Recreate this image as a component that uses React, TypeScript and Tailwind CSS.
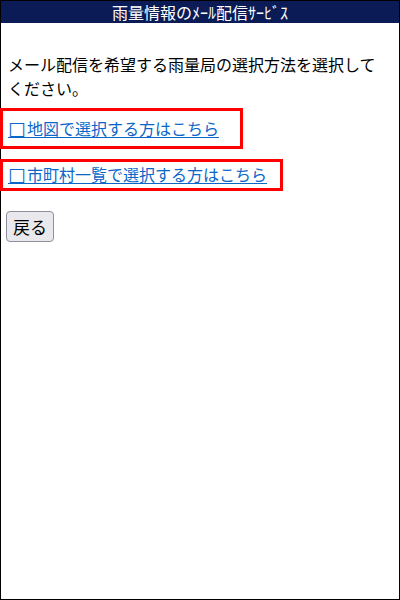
import React from "react";

const jp = "font-['Noto_Sans_CJK_JP',sans-serif]";

function SelectLink({ label, className }: { label: string; className: string }) {
  return (
    <div className={`-ml-px border-[3px] border-[#ff0000] pl-[5px] ${className}`}>
      <a href="#" className="text-[16px] leading-[24px] text-[#0a66c8] underline underline-offset-2">
        <span className="font-['DejaVu_Sans',sans-serif] text-[19px] leading-[16px] tracking-[1px]">□</span>
        {label}
      </a>
    </div>
  );
}

export default function App() {
  return (
    <div className={`box-border flex h-[600px] w-[400px] flex-col border border-black bg-white ${jp}`}>
      <header className="flex h-[22px] items-center justify-center bg-[#0b1b55] text-[16px] leading-[22px] text-white">
        雨量情報のﾒｰﾙ配信ｻｰﾋﾞｽ
      </header>
      <main className="flex flex-col items-start">
        <p className="mt-[29px] pl-[7px] pr-[16px] text-[16px] leading-[24px] text-black">
          メール配信を希望する雨量局の選択方法を選択してください。
        </p>
        <SelectLink
          label="地図で選択する方はこちら"
          className="mt-[8px] w-[243px] pt-[5px] pb-[6px]"
        />
        <SelectLink
          label="市町村一覧で選択する方はこちら"
          className="mt-[10px] w-[283px] pt-0 pb-[2px]"
        />
        <button className="mt-[20px] ml-[5px] h-[31px] rounded-[4px] border border-[#8f8f9d] bg-[#e9e9ed] px-[6px] text-[17px] leading-[20px] text-black">
          戻る
        </button>
      </main>
    </div>
  );
}
